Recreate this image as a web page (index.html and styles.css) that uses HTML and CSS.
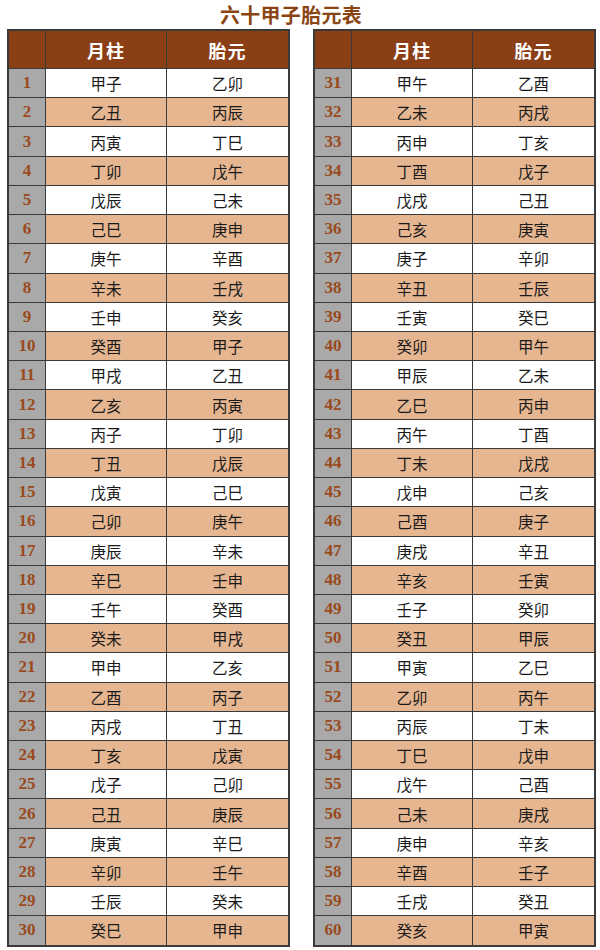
FILE: index.html
```html
<!DOCTYPE html>
<html lang="zh">
<head>
<meta charset="utf-8">
<title>六十甲子胎元表</title>
<link rel="stylesheet" href="styles.css">
</head>
<body>
<h1 class="title">六十甲子胎元表</h1>
<div class="tables">
<table class="tbl">
<thead><tr><th class="num"></th><th>月柱</th><th>胎元</th></tr></thead>
<tbody>
<tr><td class="num">1</td><td>甲子</td><td>乙卯</td></tr>
<tr class="alt"><td class="num">2</td><td>乙丑</td><td>丙辰</td></tr>
<tr><td class="num">3</td><td>丙寅</td><td>丁巳</td></tr>
<tr class="alt"><td class="num">4</td><td>丁卯</td><td>戊午</td></tr>
<tr><td class="num">5</td><td>戊辰</td><td>己未</td></tr>
<tr class="alt"><td class="num">6</td><td>己巳</td><td>庚申</td></tr>
<tr><td class="num">7</td><td>庚午</td><td>辛酉</td></tr>
<tr class="alt"><td class="num">8</td><td>辛未</td><td>壬戌</td></tr>
<tr><td class="num">9</td><td>壬申</td><td>癸亥</td></tr>
<tr class="alt"><td class="num">10</td><td>癸酉</td><td>甲子</td></tr>
<tr><td class="num">11</td><td>甲戌</td><td>乙丑</td></tr>
<tr class="alt"><td class="num">12</td><td>乙亥</td><td>丙寅</td></tr>
<tr><td class="num">13</td><td>丙子</td><td>丁卯</td></tr>
<tr class="alt"><td class="num">14</td><td>丁丑</td><td>戊辰</td></tr>
<tr><td class="num">15</td><td>戊寅</td><td>己巳</td></tr>
<tr class="alt"><td class="num">16</td><td>己卯</td><td>庚午</td></tr>
<tr><td class="num">17</td><td>庚辰</td><td>辛未</td></tr>
<tr class="alt"><td class="num">18</td><td>辛巳</td><td>壬申</td></tr>
<tr><td class="num">19</td><td>壬午</td><td>癸酉</td></tr>
<tr class="alt"><td class="num">20</td><td>癸未</td><td>甲戌</td></tr>
<tr><td class="num">21</td><td>甲申</td><td>乙亥</td></tr>
<tr class="alt"><td class="num">22</td><td>乙酉</td><td>丙子</td></tr>
<tr><td class="num">23</td><td>丙戌</td><td>丁丑</td></tr>
<tr class="alt"><td class="num">24</td><td>丁亥</td><td>戊寅</td></tr>
<tr><td class="num">25</td><td>戊子</td><td>己卯</td></tr>
<tr class="alt"><td class="num">26</td><td>己丑</td><td>庚辰</td></tr>
<tr><td class="num">27</td><td>庚寅</td><td>辛巳</td></tr>
<tr class="alt"><td class="num">28</td><td>辛卯</td><td>壬午</td></tr>
<tr><td class="num">29</td><td>壬辰</td><td>癸未</td></tr>
<tr class="alt"><td class="num">30</td><td>癸巳</td><td>甲申</td></tr>
</tbody>
</table>
<table class="tbl">
<thead><tr><th class="num"></th><th>月柱</th><th>胎元</th></tr></thead>
<tbody>
<tr><td class="num">31</td><td>甲午</td><td>乙酉</td></tr>
<tr class="alt"><td class="num">32</td><td>乙未</td><td>丙戌</td></tr>
<tr><td class="num">33</td><td>丙申</td><td>丁亥</td></tr>
<tr class="alt"><td class="num">34</td><td>丁酉</td><td>戊子</td></tr>
<tr><td class="num">35</td><td>戊戌</td><td>己丑</td></tr>
<tr class="alt"><td class="num">36</td><td>己亥</td><td>庚寅</td></tr>
<tr><td class="num">37</td><td>庚子</td><td>辛卯</td></tr>
<tr class="alt"><td class="num">38</td><td>辛丑</td><td>壬辰</td></tr>
<tr><td class="num">39</td><td>壬寅</td><td>癸巳</td></tr>
<tr class="alt"><td class="num">40</td><td>癸卯</td><td>甲午</td></tr>
<tr><td class="num">41</td><td>甲辰</td><td>乙未</td></tr>
<tr class="alt"><td class="num">42</td><td>乙巳</td><td>丙申</td></tr>
<tr><td class="num">43</td><td>丙午</td><td>丁酉</td></tr>
<tr class="alt"><td class="num">44</td><td>丁未</td><td>戊戌</td></tr>
<tr><td class="num">45</td><td>戊申</td><td>己亥</td></tr>
<tr class="alt"><td class="num">46</td><td>己酉</td><td>庚子</td></tr>
<tr><td class="num">47</td><td>庚戌</td><td>辛丑</td></tr>
<tr class="alt"><td class="num">48</td><td>辛亥</td><td>壬寅</td></tr>
<tr><td class="num">49</td><td>壬子</td><td>癸卯</td></tr>
<tr class="alt"><td class="num">50</td><td>癸丑</td><td>甲辰</td></tr>
<tr><td class="num">51</td><td>甲寅</td><td>乙巳</td></tr>
<tr class="alt"><td class="num">52</td><td>乙卯</td><td>丙午</td></tr>
<tr><td class="num">53</td><td>丙辰</td><td>丁未</td></tr>
<tr class="alt"><td class="num">54</td><td>丁巳</td><td>戊申</td></tr>
<tr><td class="num">55</td><td>戊午</td><td>己酉</td></tr>
<tr class="alt"><td class="num">56</td><td>己未</td><td>庚戌</td></tr>
<tr><td class="num">57</td><td>庚申</td><td>辛亥</td></tr>
<tr class="alt"><td class="num">58</td><td>辛酉</td><td>壬子</td></tr>
<tr><td class="num">59</td><td>壬戌</td><td>癸丑</td></tr>
<tr class="alt"><td class="num">60</td><td>癸亥</td><td>甲寅</td></tr>
</tbody>
</table>
</div>
</body>
</html>
```

FILE: styles.css
```css
html, body {
  margin: 0;
  padding: 0;
  background: #ffffff;
}
body {
  width: 600px;
  font-family: "Noto Sans CJK SC", "Noto Sans", sans-serif;
}
.title {
  margin: 0;
  height: 29px;
  line-height: 29px;
  font-size: 20px;
  font-weight: bold;
  color: #8b4513;
  text-align: center;
  padding-right: 18px;
  letter-spacing: 0.3px;
}
.tables {
  display: flex;
  gap: 23px;
  padding-left: 7px;
}
.tbl {
  border-collapse: collapse;
  table-layout: fixed;
  border: 2px solid #3a3a3a;
}
.tbl th, .tbl td {
  border: 1.5px solid #3a3a3a;
  padding: 0;
  text-align: center;
}
.tbl th {
  background: #8b3f17;
  color: #ffffff;
  font-size: 18px;
  font-weight: bold;
  height: 37px;
  letter-spacing: 1px;
}
.tbl th.num { width: 36px; }
.tbl th:nth-child(2) { width: 120px; }
.tbl th:nth-child(3) { width: 121px; }
.tbl td {
  height: 28.23px;
  font-size: 15.5px;
  color: #1a1a1a;
  background: #ffffff;
  line-height: 20px;
}
.tbl tr.alt td {
  background: #e6b691;
}
.tbl td.num, .tbl tr.alt td.num {
  background: #a9a9a9;
  color: #9a4a1c;
  font-family: "Liberation Serif", "DejaVu Serif", serif;
  font-weight: bold;
  font-size: 17px;
}
```
